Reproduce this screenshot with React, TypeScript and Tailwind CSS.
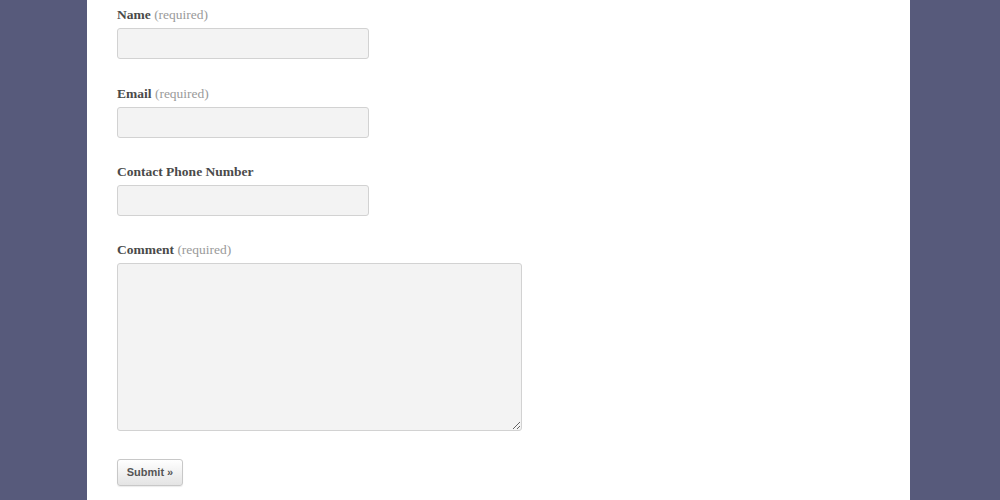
import React from "react";

function Field({
  label,
  required,
  gap,
  children,
}: {
  label: string;
  required?: boolean;
  gap: string;
  children: React.ReactNode;
}) {
  return (
    <div className={gap}>
      <label className="block mb-[3px] h-5 text-[13.5px] leading-5 font-bold text-[#4a4a4a]">
        {label}
        {required && <span className="font-normal text-[#9a9a9a]"> (required)</span>}
      </label>
      {children}
    </div>
  );
}

const inputCls =
  "block w-[252px] h-[31px] bg-[#f3f3f3] border border-[#d2d2d2] rounded-[3px]";

export default function App() {
  return (
    <div className="min-h-[500px] bg-[#575a7b] font-['Liberation_Serif',serif]">
      <div className="ml-[87px] w-[823px] min-h-[500px] bg-white pl-[30px] pt-[5px]">
        <form>
          <Field label="Name" required gap="mb-[25px]">
            <input type="text" className={inputCls} />
          </Field>
          <Field label="Email" required gap="mb-6">
            <input type="text" className={inputCls} />
          </Field>
          <Field label="Contact Phone Number" gap="mb-6">
            <input type="text" className={inputCls} />
          </Field>
          <Field label="Comment" required gap="mb-[28px]">
            <textarea className="block w-[405px] h-[168px] bg-[#f3f3f3] border border-[#d2d2d2] rounded-[3px]" />
          </Field>
          <button
            type="button"
            className="block w-[66px] h-[27px] rounded-[3px] border border-[#c8c8c8] bg-gradient-to-b from-white to-[#e4e4e4] text-[11px] font-bold text-[#555] font-['Liberation_Sans',sans-serif] shadow-[0_1px_1px_rgba(0,0,0,0.08)]"
          >
            Submit »
          </button>
        </form>
      </div>
    </div>
  );
}
